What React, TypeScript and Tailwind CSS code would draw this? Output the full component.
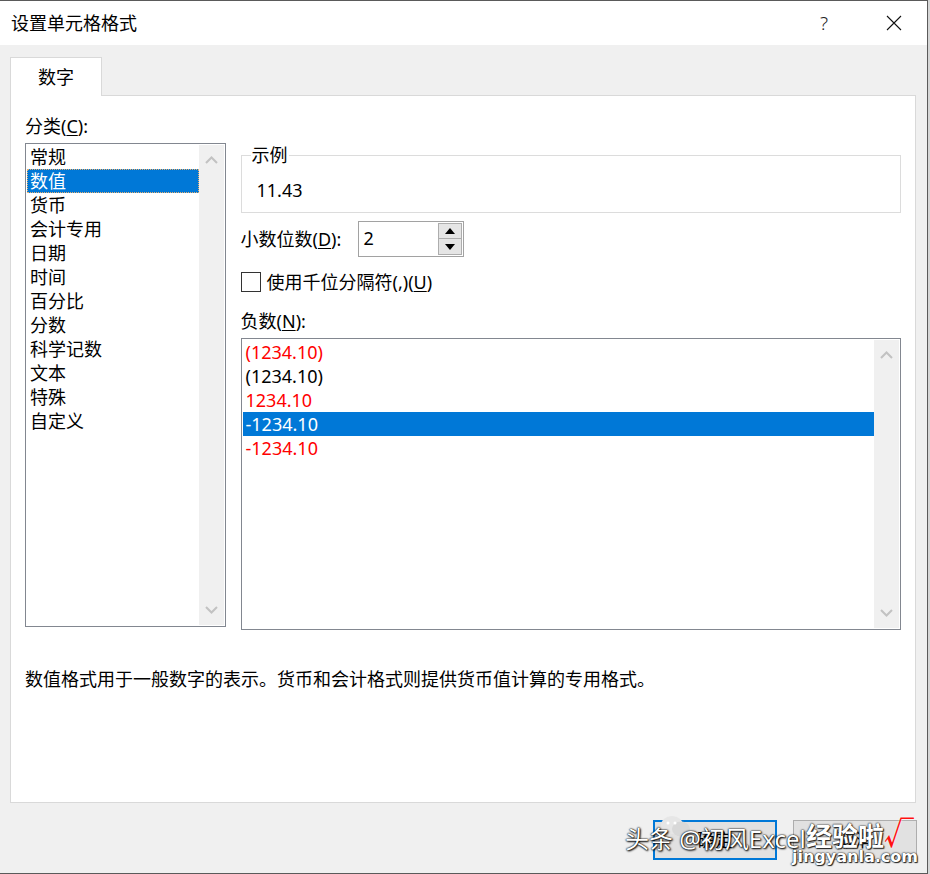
import React from "react";

const categories = [
  "常规",
  "数值",
  "货币",
  "会计专用",
  "日期",
  "时间",
  "百分比",
  "分数",
  "科学记数",
  "文本",
  "特殊",
  "自定义",
];

const negatives = [
  { text: "(1234.10)", red: true },
  { text: "(1234.10)", red: false },
  { text: "1234.10", red: true },
  { text: "-1234.10", red: false, selected: true },
  { text: "-1234.10", red: true },
];

const Chevron = ({ up }: { up?: boolean }) => (
  <svg width="13" height="8" viewBox="0 0 13 8" className="mx-auto block">
    <polyline
      points={up ? "1,7 6.5,1.5 12,7" : "1,1 6.5,6.5 12,1"}
      fill="none"
      stroke="#c2c2c2"
      strokeWidth="2"
    />
  </svg>
);

const ScrollBar = () => (
  <div className="flex w-[25px] flex-col justify-between bg-[#f0f0f0] py-[11px]">
    <Chevron up />
    <Chevron />
  </div>
);

const Triangle = ({ up }: { up?: boolean }) => (
  <svg width="10" height="6" viewBox="0 0 10 6">
    <polygon points={up ? "0,6 5,0 10,6" : "0,0 10,0 5,6"} fill="#000" />
  </svg>
);

const App = () => {
  return (
    <div className="flex h-[874px] w-[930px] bg-[#d6d6d6] font-['Noto_Sans','Noto_Sans_CJK_SC',sans-serif] text-[18px] text-black">
      <div className="relative flex h-[874px] w-[928px] flex-col border-y border-r border-[#5a5a5a] bg-[#f0f0f0]">
        {/* title bar */}
        <div className="flex h-[44px] items-center bg-white pl-[11px] pr-[10px]">
          <span className="leading-[24px]">设置单元格格式</span>
          <span className="ml-auto flex w-[46px] justify-center text-[19px] font-light text-[#222]">
            ?
          </span>
          <span className="ml-[24px] flex w-[46px] justify-center">
            <svg width="16" height="16" viewBox="0 0 16 16">
              <path d="M1 1 L15 15 M15 1 L1 15" stroke="#111" strokeWidth="1.1" />
            </svg>
          </span>
        </div>

        <div className="flex flex-1 flex-col px-[10px] pt-[12px]">
          {/* tab */}
          <div className="relative z-10 flex h-[39px] w-[92px] items-center justify-center border border-b-0 border-[#d9d9d9] bg-white">
            数字
          </div>
          {/* panel */}
          <div className="-mt-px flex h-[708px] w-[906px] flex-col border border-[#d9d9d9] bg-white px-[14px] pt-[18px]">
            <div className="flex">
              {/* left column */}
              <div className="w-[201px]">
                <div className="h-[24px] leading-[24px]">
                  分类(<span className="underline underline-offset-2">C</span>):
                </div>
                <div className="mt-[5px] flex h-[484px] border border-[#828790] p-[1px]">
                  <div className="flex-1">
                    {categories.map((c) => (
                      <div
                        key={c}
                        className={
                          c === "数值"
                            ? "h-[24px] border border-dotted border-[#e8b070] bg-[#0078d7] pl-[2px] leading-[22px] text-white"
                            : "h-[24px] pl-[3px] leading-[24px]"
                        }
                      >
                        {c}
                      </div>
                    ))}
                  </div>
                  <ScrollBar />
                </div>
              </div>

              {/* right column */}
              <div className="ml-[15px] mt-[29px] w-[662px]">
                <fieldset className="border border-[#dcdcdc] px-[9px] pb-[10px]">
                  <legend className="px-[1px] leading-[24px]">示例</legend>
                  <div className="ml-[6px] mt-[11px] leading-[24px]">11.43</div>
                </fieldset>

                <div className="mt-[8px] flex h-[36px] items-center">
                  <span className="w-[117px] leading-[24px]">
                    小数位数(<span className="underline underline-offset-2">D</span>):
                  </span>
                  <div className="flex h-[36px] w-[106px] border border-[#a2a2a2] bg-white">
                    <span className="pl-[5px] leading-[32px]">2</span>
                    <div className="ml-auto mr-px flex flex-col py-px">
                      <div className="flex h-[16px] w-[24px] items-center justify-center border border-[#adadad] bg-[#e5e5e5]">
                        <Triangle up />
                      </div>
                      <div className="flex h-[16px] w-[24px] items-center justify-center border border-t-0 border-[#adadad] bg-[#e5e5e5]">
                        <Triangle />
                      </div>
                    </div>
                  </div>
                </div>

                <div className="mt-[13px] flex h-[24px] items-center">
                  <div className="h-[20px] w-[20px] border border-[#333] bg-white" />
                  <span className="ml-[6px] leading-[24px]">
                    使用千位分隔符(,)(<span className="underline underline-offset-2">U</span>)
                  </span>
                </div>

                <div className="mt-[15px] h-[24px] leading-[24px]">
                  负数(<span className="underline underline-offset-2">N</span>):
                </div>
                <div className="mt-[5px] flex h-[292px] border border-[#828790] p-[1px]">
                  <div className="flex-1">
                    {negatives.map((n, i) => (
                      <div
                        key={i}
                        className={
                          n.selected
                            ? "h-[24px] bg-[#0078d7] pl-[3px] leading-[24px] text-white"
                            : n.red
                              ? "h-[24px] pl-[3px] leading-[24px] text-[#ff0000]"
                              : "h-[24px] pl-[3px] leading-[24px]"
                        }
                      >
                        {n.text}
                      </div>
                    ))}
                  </div>
                  <ScrollBar />
                </div>
              </div>
            </div>

            <p className="mt-[37px] leading-[24px]">
              数值格式用于一般数字的表示。货币和会计格式则提供货币值计算的专用格式。
            </p>
          </div>

          {/* buttons */}
          <div className="mt-[17px] flex justify-end">
            <button className="flex h-[40px] w-[124px] items-center justify-center border-2 border-[#0078d7] bg-[#e1e1e1]">
              确定
            </button>
            <button className="ml-[16px] flex h-[40px] w-[124px] items-center justify-center border border-[#adadad] bg-[#e1e1e1]">
              取消
            </button>
          </div>
        </div>

        {/* watermark */}
        <div className="absolute left-[660px] top-[813px]">
          <svg width="32" height="24" viewBox="0 0 32 24">
            <ellipse cx="12" cy="11" rx="11" ry="9" fill="#e6e6e6" />
            <ellipse cx="21" cy="15" rx="9" ry="7.5" fill="#d8d8d8" />
            <circle cx="8" cy="9" r="1.5" fill="#fff" />
            <circle cx="15" cy="9" r="1.5" fill="#fff" />
          </svg>
        </div>
        <div className="absolute left-[625px] top-[823px] text-[24px] leading-[30px] text-white [text-shadow:0_0_2px_#000,1px_1px_2px_#000,0_0_1px_#000]">
          头条 @初风Excel
        </div>
        <div className="absolute left-[806px] top-[820px] text-[26px] font-bold leading-[30px] text-white [text-shadow:0_0_2px_#222,1px_1px_1px_#222,0_0_1px_#000]">
          经验啦
        </div>
        <div className="absolute left-[884px] top-[816px] text-[30px] font-bold leading-[32px] text-[#ff1010] [text-shadow:0_0_2px_#fff]">
          √
        </div>
        <div className="absolute left-[792px] top-[846px] font-['DejaVu_Sans',sans-serif] text-[16px] font-bold leading-[20px] text-white [text-shadow:0_0_2px_#222,1px_1px_1px_#222,0_0_1px_#000]">
          jingyanla.com
        </div>
      </div>
    </div>
  );
};

export default App;
